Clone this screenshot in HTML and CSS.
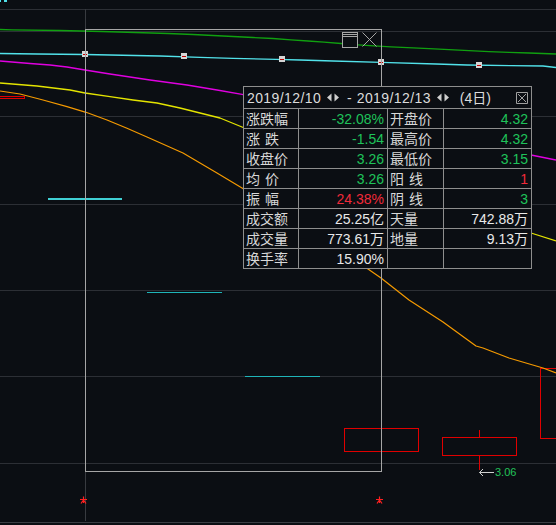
FILE: index.html
```html
<!DOCTYPE html>
<html lang="zh-CN">
<head>
<meta charset="utf-8">
<title>K线区间统计</title>
<link rel="stylesheet" href="styles.css">
</head>
<body>
<div class="chart">
  <svg class="plot" width="556" height="525" viewBox="0 0 556 525" xmlns="http://www.w3.org/2000/svg">
    <path class="grid" d="M0 9.5H556M0 31.5H556M0 116.5H556M0 204.5H556M0 290.5H556M0 376.5H556M0 463.5H556"/>
    <path class="vgrid" d="M85.5 9V521"/>
    <path class="axis" d="M0 522.5H556"/>
    <path class="tick" d="M0 0h1v2h-1zM4 0h3v2h-3z"/>

    <rect class="candle" x="-1.5" y="96.5" width="26" height="2"/>
    <rect class="candle" x="344.5" y="428.5" width="74" height="23"/>
    <path class="candle" d="M479.5 430V437M479.5 455V470"/>
    <rect class="candle" x="442.5" y="437.5" width="74" height="18"/>
    <rect class="candle" x="540.5" y="368.5" width="30" height="70"/>

    <path class="flat1" d="M48 199H122"/>
    <path class="flat2" d="M147 292.5H222"/>
    <path class="flat2" d="M245 376.5H320"/>

    <polyline class="ln green-ln" points="0,29.5 12,29.8 60,30.5 102,31.5 135,32.5 168,33.5 193,34.5 213,35.5 233,36.5 253,37.5 273,38.5 291,39.8 308,41 324,42.2 341,43.5 358,44.8 374,45.8 391,46.8 413,47.8 429,48.6 449,49.6 469,50.6 489,51.6 509,52.3 529,53 556,54"/>
    <polyline class="ln cyan-ln" points="0,53.5 37,54 85,54.5 110,55 160,56 200,57.3 233,58.3 276,59.3 300,60 333,61 381,62.3 436,64 467,65 510,65.6 543,66 556,67.5"/>
    <polyline class="ln magenta-ln" points="0,61 12,62 30,63.5 50,65 67,67 85,70 110,74 150,80 187,85 217,90 242,94.3 300,108 400,130 480,145 531,155 556,160"/>
    <polyline class="ln yellow-ln" points="0,83 37,86 70,90 85,93 110,96.7 133,100 157,103 180,108 200,113 220,118 242,127 300,150 400,190 480,220 531,233 556,241"/>
    <polyline class="ln orange-ln" points="0,91 20,94 43,100 67,106.7 86,112.3 107,120 127,128.3 147,137 183,153 200,163 217,173 242,188 300,225 368,269 381,278 409,300 443,322 476,346 483,348 509,358 543,368 556,373"/>

    <g class="marks">
      <rect x="82" y="51" width="6" height="6"/>
      <rect x="181" y="53" width="6" height="6"/>
      <rect x="279" y="56" width="6" height="6"/>
      <rect x="378" y="59" width="6" height="6"/>
      <rect x="476" y="62" width="6" height="6"/>
    </g>
    <path class="mark-red" d="M83 54.5H87M182 56.5H186M280 59.5H284M379 62.5H383M477 65.5H481"/>

    <rect class="box" x="85.5" y="29.5" width="296" height="442"/>
    <rect class="icon-bg" x="342.5" y="32.5" width="15" height="15"/>
    <path class="icon" d="M342 34.5H358M342 36.5H358"/>
    <path class="icon" d="M362.5 32.5L376.5 46.5M376.5 32.5L362.5 46.5"/>

    <path class="star" d="M80 499.5H87M83.5 496.5V503M81 503.5L83 500.5M86 503.5L84 500.5"/>
    <path class="star" d="M376 499.5H383M379.5 496.5V503M377 503.5L379 500.5M382 503.5L380 500.5"/>

    <path class="arrow" d="M479.5 472.5H494M483 469L479.5 472.5L483 476"/>
    <text class="price" x="495" y="476">3.06</text>
  </svg>

  <div class="tip">
    <div class="cell head">
      <span class="date">2019/12/10</span>
      <svg class="arrows" width="13" height="9" viewBox="0 0 13 9"><path d="M0 4.5L4.5 0.5V8.5Z M7.5 0.5L12 4.5L7.5 8.5Z"/></svg>
      <span class="dash">-</span>
      <span class="date">2019/12/13</span>
      <svg class="arrows" width="13" height="9" viewBox="0 0 13 9"><path d="M0 4.5L4.5 0.5V8.5Z M7.5 0.5L12 4.5L7.5 8.5Z"/></svg>
      <span class="days">(4日)</span>
      <svg class="close" width="12" height="12" viewBox="0 0 12 12"><path d="M0.5 0.5H11.5V11.5H0.5Z M2 2L10 10M10 2L2 10"/></svg>
    </div>

    <div class="cell lab">涨跌幅</div>
    <div class="cell val green">-32.08%</div>
    <div class="cell lab">开盘价</div>
    <div class="cell val green">4.32</div>

    <div class="cell lab">涨<span class="sp"></span>跌</div>
    <div class="cell val green">-1.54</div>
    <div class="cell lab">最高价</div>
    <div class="cell val green">4.32</div>

    <div class="cell lab">收盘价</div>
    <div class="cell val green">3.26</div>
    <div class="cell lab">最低价</div>
    <div class="cell val green">3.15</div>

    <div class="cell lab">均<span class="sp"></span>价</div>
    <div class="cell val green">3.26</div>
    <div class="cell lab">阳<span class="sp"></span>线</div>
    <div class="cell val red">1</div>

    <div class="cell lab">振<span class="sp"></span>幅</div>
    <div class="cell val red">24.38%</div>
    <div class="cell lab">阴<span class="sp"></span>线</div>
    <div class="cell val green">3</div>

    <div class="cell lab">成交额</div>
    <div class="cell val">25.25亿</div>
    <div class="cell lab">天量</div>
    <div class="cell val">742.88万</div>

    <div class="cell lab">成交量</div>
    <div class="cell val">773.61万</div>
    <div class="cell lab">地量</div>
    <div class="cell val">9.13万</div>

    <div class="cell lab">换手率</div>
    <div class="cell val">15.90%</div>
    <div class="cell"></div>
    <div class="cell"></div>
  </div>
</div>
</body>
</html>
```

FILE: styles.css
```css
* {
  box-sizing: border-box;
}

html,
body {
  margin: 0;
  padding: 0;
  background: #0b0e13;
}

body {
  width: 556px;
  height: 525px;
  overflow: hidden;
  font-family: "Liberation Sans", "Noto Sans CJK SC", sans-serif;
}

.chart {
  position: relative;
  width: 556px;
  height: 525px;
}

.plot {
  position: absolute;
  left: 0;
  top: 0;
  display: block;
}

.grid {
  stroke: #2c2f35;
  stroke-width: 1;
  fill: none;
  shape-rendering: crispEdges;
}

.vgrid {
  stroke: #383b40;
  stroke-width: 1;
  fill: none;
  shape-rendering: crispEdges;
}

.axis {
  stroke: #3a3d43;
  stroke-width: 1;
  fill: none;
  shape-rendering: crispEdges;
}

.tick {
  fill: #4fdfe8;
}

.candle {
  fill: none;
  stroke: #e00000;
  stroke-width: 1;
  shape-rendering: crispEdges;
}

.flat1 {
  stroke: #40d0d4;
  stroke-width: 2;
  fill: none;
  shape-rendering: crispEdges;
}

.flat2 {
  stroke: #1fb4b8;
  stroke-width: 1;
  fill: none;
  shape-rendering: crispEdges;
}

.ln {
  fill: none;
  stroke-width: 1.3;
  stroke-linejoin: round;
}

.green-ln {
  stroke: #10a010;
}

.cyan-ln {
  stroke: #52e2ea;
}

.magenta-ln {
  stroke: #e000e0;
}

.yellow-ln {
  stroke: #e4e400;
}

.orange-ln {
  stroke: #f59a00;
  stroke-width: 1.2;
}

.marks rect {
  fill: #d6d6d6;
}

.mark-red {
  stroke: #c00000;
  stroke-width: 1;
  shape-rendering: crispEdges;
}

.box {
  fill: none;
  stroke: #a6a6a6;
  stroke-width: 1;
  shape-rendering: crispEdges;
}

.icon-bg {
  fill: #0b0e13;
  stroke: #a6a6a6;
  stroke-width: 1;
  shape-rendering: crispEdges;
}

.icon {
  stroke: #a6a6a6;
  stroke-width: 1;
  fill: none;
}

.star {
  stroke: #ff2020;
  stroke-width: 1.2;
  fill: none;
}

.arrow {
  stroke: #cfcfcf;
  stroke-width: 1;
  fill: none;
}

.price {
  font-family: "Liberation Sans", sans-serif;
  font-size: 11px;
  fill: #22c25a;
}

/* statistics tooltip */
.tip {
  position: absolute;
  left: 243px;
  top: 86px;
  display: grid;
  grid-template-columns: 54px 88px 55px 87px;
  grid-template-rows: 21px repeat(8, 19px);
  gap: 1px;
  padding: 1px;
  background: #8e8e8e;
  font-size: 14px;
}

.cell {
  background: #0b0e13;
  display: flex;
  align-items: center;
  line-height: 1;
  white-space: nowrap;
  color: #d8d8d8;
}

.lab {
  padding-left: 2px;
}

.val {
  justify-content: flex-end;
  padding-right: 3px;
  color: #e8e8e8;
}

.val.green {
  color: #1fc25a;
}

.val.red {
  color: #f02a3a;
}

.sp {
  display: inline-block;
  width: 5px;
}

.head {
  grid-column: 1 / -1;
  padding: 0 3px 0 3px;
  color: #dcdcdc;
}

.date {
  letter-spacing: 0.4px;
}

.arrows {
  display: block;
  fill: #cfcfcf;
  margin-left: 6px;
}

.dash {
  margin-left: 7px;
}

.head .dash + .date {
  margin-left: 5px;
}

.days {
  margin-left: 10px;
}

.close {
  display: block;
  margin-left: auto;
  fill: none;
  stroke: #a0a0a0;
  stroke-width: 1;
}
```
